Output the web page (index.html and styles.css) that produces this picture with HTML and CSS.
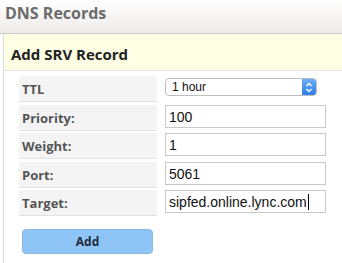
FILE: index.html
```html
<!DOCTYPE html>
<html lang="en">
<head>
  <meta charset="UTF-8" />
  <title>DNS Records</title>
  <link rel="stylesheet" href="styles.css">
</head>
<body>
  <header class="header">
    <h1>DNS Records</h1>
  </header>

  <section class="panel">
    <h2 class="panel-title">Add SRV Record</h2>

    <form class="record-form">
      <div class="row">
        <label class="label">TTL</label>
        <div class="field">
          <div class="select">
            <span class="select-value">1 hour</span>
            <span class="select-arrow">
              <svg width="8" height="11" viewBox="0 0 8 11">
                <path d="M1.5 4 L4 1.5 L6.5 4 M1.5 7 L4 9.5 L6.5 7" fill="none" stroke="#fff" stroke-width="1.4" />
              </svg>
            </span>
          </div>
        </div>
      </div>

      <div class="row">
        <label class="label">Priority:</label>
        <div class="field"><input class="text-input" type="text" value="100"></div>
      </div>

      <div class="row">
        <label class="label">Weight:</label>
        <div class="field"><input class="text-input" type="text" value="1"></div>
      </div>

      <div class="row">
        <label class="label">Port:</label>
        <div class="field"><input class="text-input" type="text" value="5061"></div>
      </div>

      <div class="row">
        <label class="label">Target:</label>
        <div class="field">
          <div class="text-input">sipfed.online.lync.com<span class="caret"></span></div>
        </div>
      </div>

      <button type="button" class="add-button">Add</button>
    </form>
  </section>
</body>
</html>
```

FILE: styles.css
```css
body {
  margin: 0;
  font-family: 'Open Sans', sans-serif;
  background: #fff;
  color: #333;
  overflow: hidden;
}

/* Header */
.header {
  height: 33px;
  background: linear-gradient(to bottom, #ffffff, #eeebe8);
  border-bottom: 1px solid #c9c9c9;
}

.header h1 {
  margin: 0;
  padding: 1px 0 0 5px;
  font-size: 16px;
  line-height: 24px;
  font-weight: bold;
  color: #6b6b6b;
}

/* Panel */
.panel {
  margin-left: 3px;
  border-left: 1px solid #dedede;
  min-height: 240px;
}

.panel-title {
  margin: 0;
  height: 36px;
  padding-left: 7px;
  background: #fdfee3;
  border-bottom: 1px solid #e4e4e4;
  font-size: 15px;
  line-height: 40px;
  font-weight: bold;
  color: #222;
}

.record-form {
  display: flex;
  flex-direction: column;
  gap: 2.5px;
  padding: 5px 0 0 15px;
}

.row {
  display: flex;
  gap: 8px;
}

.label {
  width: 135px;
  height: 25px;
  padding-left: 3px;
  background: #f4f4f4;
  border-bottom: 1px solid #e2e2e2;
  font-size: 13px;
  line-height: 27px;
  font-weight: bold;
  color: #555;
}

.field {
  display: flex;
  align-items: flex-start;
}

.select {
  display: flex;
  margin-top: 2px;
  width: 150px;
  height: 16px;
  border: 1px solid #bdbdbd;
  border-radius: 4px;
  overflow: hidden;
  font-family: 'Liberation Sans', sans-serif;
  font-size: 12px;
  line-height: 17px;
  color: #111;
  background: #fff;
}

.select-value {
  flex: 1;
  padding-left: 6px;
}

.select-arrow {
  width: 14px;
  display: flex;
  align-items: center;
  justify-content: center;
  background: linear-gradient(to bottom, #6aaef7, #2f7de8);
}

.text-input {
  box-sizing: border-box;
  width: 161px;
  height: 23px;
  margin: 0;
  padding: 1px 3px 0;
  border: 1px solid #c9c9c9;
  font-family: 'Liberation Sans', sans-serif;
  font-size: 14px;
  line-height: 21px;
  color: #111;
  background: #fff;
  outline: none;
}

.caret {
  display: inline-block;
  width: 1px;
  height: 16px;
  margin-left: 1px;
  vertical-align: -3px;
  background: #000;
}

/* Button */
.add-button {
  margin: 10px 0 0 3px;
  width: 131px;
  height: 25px;
  border: 1px solid #8ab8e6;
  border-radius: 4px;
  background: #8fc5f6;
  font-family: 'Open Sans', sans-serif;
  font-size: 12px;
  font-weight: bold;
  color: #1e2a38;
  cursor: pointer;
}
```
